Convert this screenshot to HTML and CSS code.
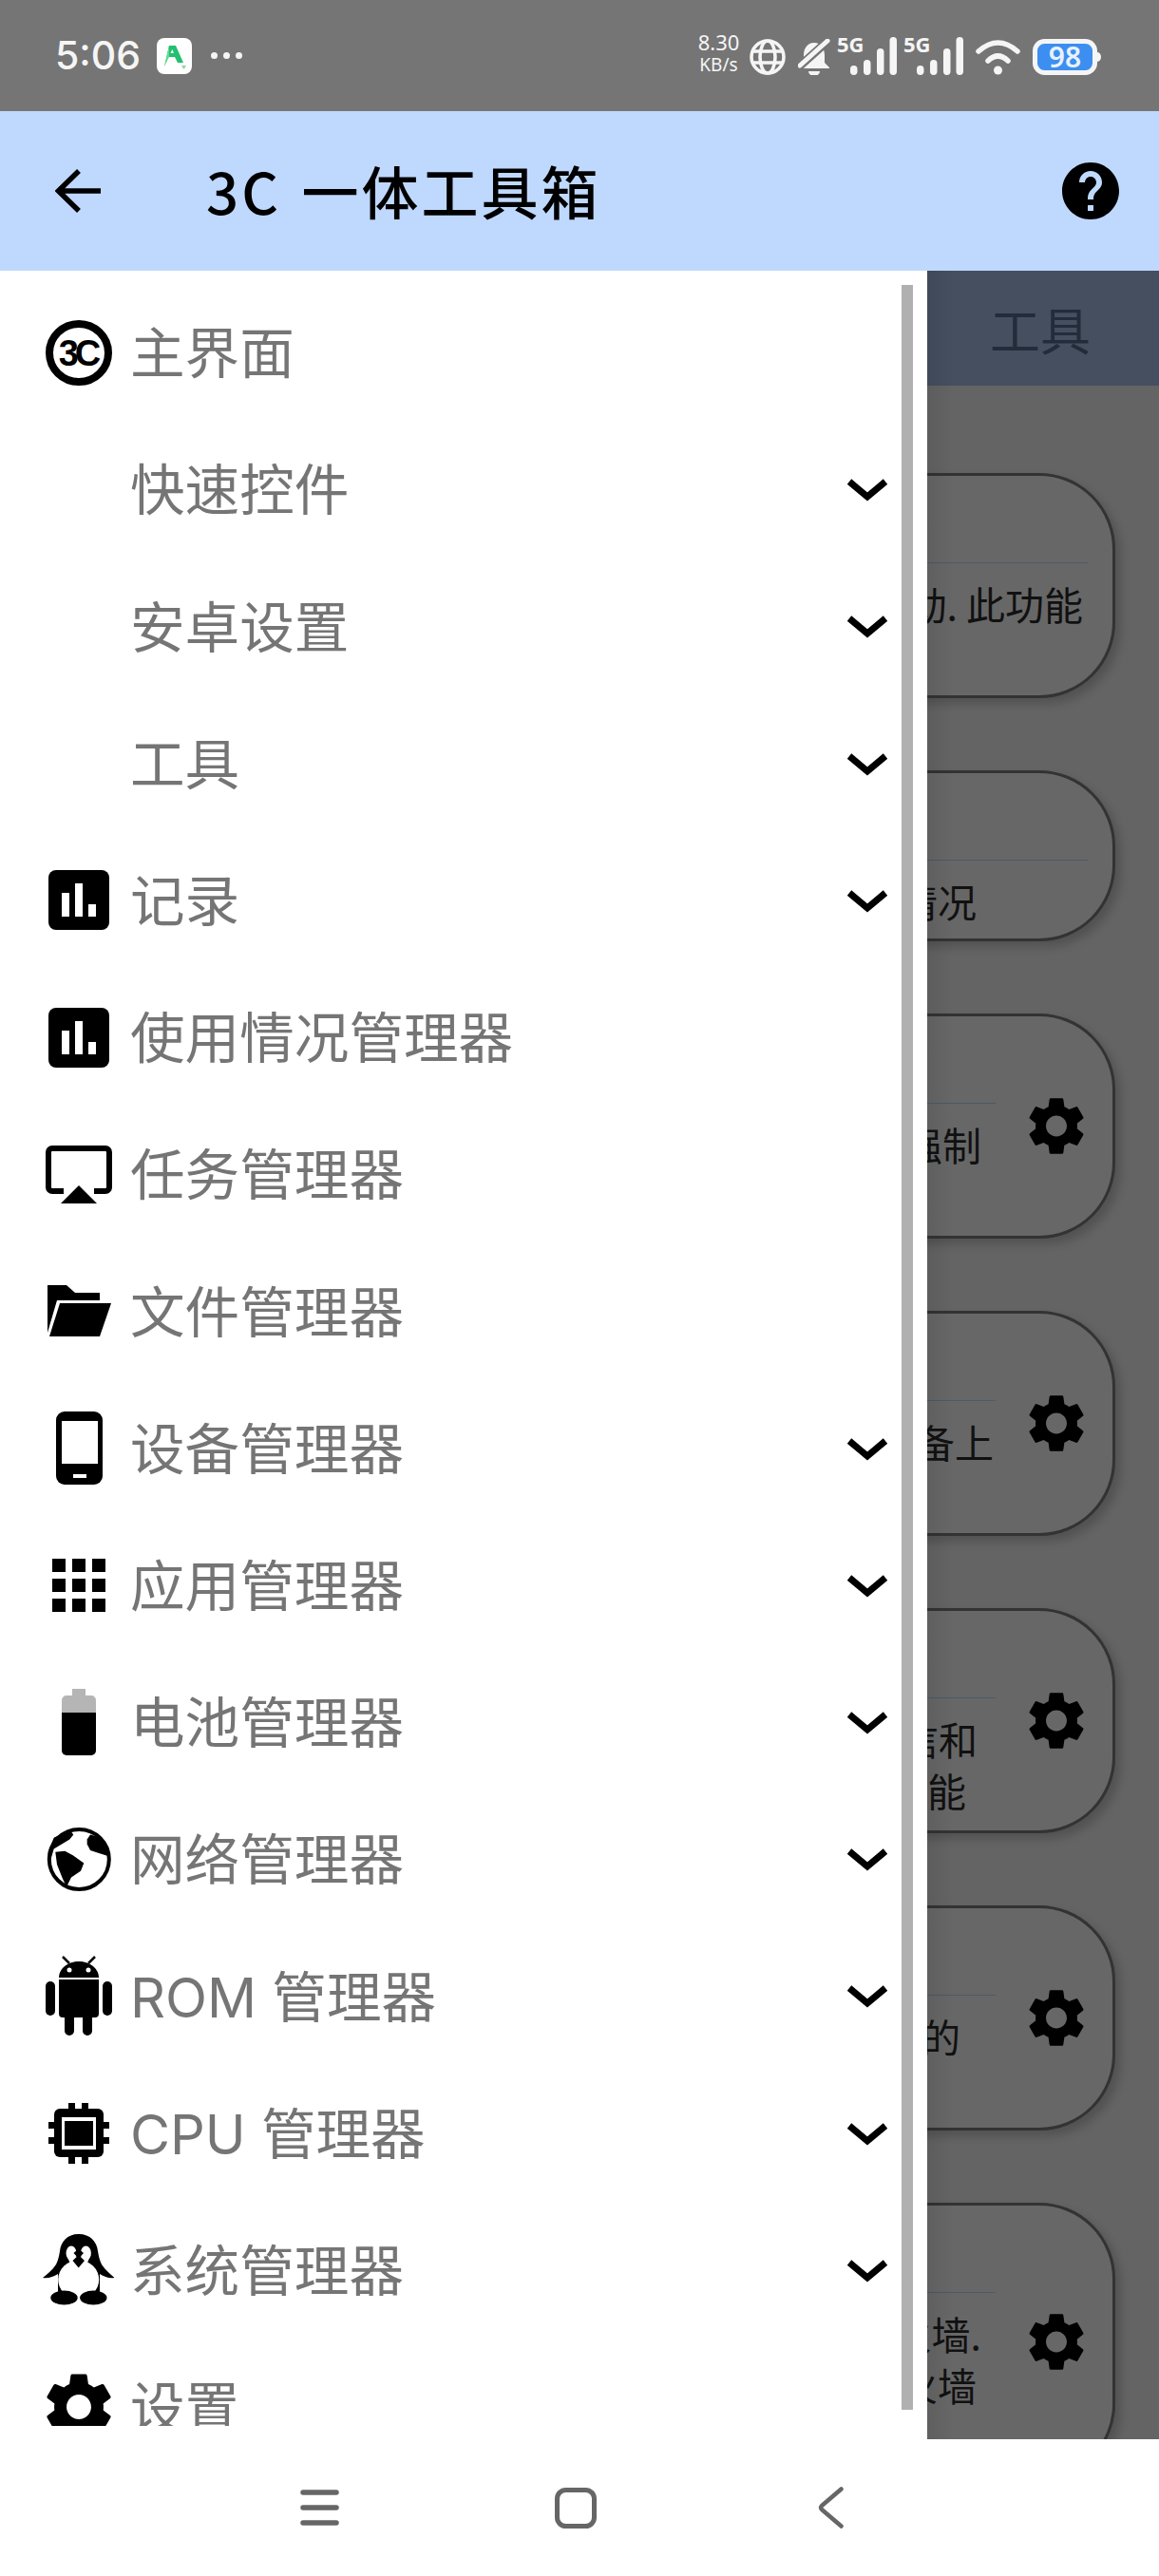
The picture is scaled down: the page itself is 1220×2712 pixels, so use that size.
FILE: index.html
```html
<!DOCTYPE html>
<html lang="zh-CN">
<head>
    <meta charset="UTF-8">
    <meta name="viewport" content="width=device-width, initial-scale=1.0">
    <title>3C 一体工具箱</title>
    <link rel="stylesheet" href="styles.css">
</head>
<body>
    <svg class="defs" aria-hidden="true">
        <symbol id="gear" viewBox="2.6 2 18.8 20">
            <path d="M19.14 12.94c.04-.3.06-.61.06-.94 0-.32-.02-.64-.07-.94l2.03-1.58c.18-.14.23-.41.12-.61l-1.92-3.32c-.12-.22-.37-.29-.59-.22l-2.39.96c-.5-.38-1.03-.7-1.62-.94l-.36-2.54c-.04-.24-.24-.41-.48-.41h-3.84c-.24 0-.43.17-.47.41l-.36 2.54c-.59.24-1.13.57-1.62.94l-2.39-.96c-.22-.08-.47 0-.59.22L2.74 8.87c-.12.21-.08.47.12.61l2.03 1.58c-.05.3-.09.63-.09.94s.02.64.07.94l-2.03 1.58c-.18.14-.23.41-.12.61l1.92 3.32c.12.22.37.29.59.22l2.39-.96c.5.38 1.03.7 1.62.94l.36 2.54c.05.24.24.41.48.41h3.84c.24 0 .44-.17.47-.41l.36-2.54c.59-.24 1.13-.56 1.62-.94l2.39.96c.22.08.47 0 .59-.22l1.92-3.32c.12-.22.07-.47-.12-.61l-2.01-1.58zM12 15.6c-1.98 0-3.6-1.62-3.6-3.6s1.62-3.6 3.6-3.6 3.6 1.62 3.6 3.6-1.62 3.6-3.6 3.6z"/>
        </symbol>
        <symbol id="chevron" viewBox="0 0 42 26">
            <path d="M2 4 L21 20 L40 4" fill="none" stroke="#000" stroke-width="7"/>
        </symbol>
        <symbol id="bars" viewBox="0 0 64 63">
            <rect width="64" height="63" rx="8"/>
            <path fill="#fff" d="M14 24h8v25h-8zM28 14h8v35h-8zM42 36h8v13h-8z"/>
        </symbol>
        <symbol id="signal" viewBox="0 0 63 41">
            <text x="0" y="17" class="signal-type">5G</text>
            <g fill="#f5f5f5">
                <rect x="14" y="31" width="7.500" height="10" rx="3.700"/>
                <rect x="28" y="25" width="7.500" height="16" rx="3.700"/>
                <rect x="42" y="13" width="7.500" height="28" rx="3.700"/>
                <rect x="55.500" y="1" width="7.500" height="40" rx="3.700"/>
            </g>
        </symbol>
    </svg>

    <div class="phone">
        <div class="status-bar">
            <span class="clock">5:06</span>
            <svg class="app-badge" viewBox="0 0 37 38">
                <rect width="37" height="38" rx="8" fill="#fff"/>
                <path d="M13 8H20L28 26H22L19 20H12L8 30z" fill="#22c070"/>
                <path d="M13 8L8 30L13 20z" fill="#5fdc8f"/>
                <path d="M14.500 16h3.500l-1.700-4z" fill="#fff"/>
                <path d="M26 29h5l-2.500 4z" fill="#8ad6a6"/>
            </svg>
            <span class="dots"><i></i><i></i><i></i></span>
            <div class="status-icons">
                <div class="net-speed"><span>8.30</span><span class="unit">KB/s</span></div>
                <svg class="ic-globe" viewBox="0 0 38 38" fill="none" stroke="#f5f5f5" stroke-width="3.600">
                    <circle cx="19" cy="19" r="17"/>
                    <ellipse cx="19" cy="19" rx="8" ry="17"/>
                    <path d="M3 13h32M3 25h32"/>
                </svg>
                <svg class="ic-bell" viewBox="0 0 34 38">
                    <path d="M17 4C10 4 6 10 6 17v8l-5 5v1h32v-1l-5-5v-8c0-7-4-13-11-13z" fill="#f5f5f5"/>
                    <path d="M11 34h12a6 5 0 0 1-12 0z" fill="#f5f5f5"/>
                    <path d="M36 -2L-2 32" stroke="#757575" stroke-width="9"/>
                    <path d="M31 2L2 28" stroke="#f5f5f5" stroke-width="5" stroke-linecap="round"/>
                </svg>
                <svg class="ic-signal"><use href="#signal"/></svg>
                <svg class="ic-signal"><use href="#signal"/></svg>
                <svg class="ic-wifi" viewBox="0 0 47 38" fill="none" stroke="#f5f5f5" stroke-width="5.500" stroke-linecap="round">
                    <path d="M3 13Q23.500 -5 44 13"/>
                    <path d="M13 23Q23.500 13 34 23"/>
                    <circle cx="23.500" cy="33" r="4.500" fill="#f5f5f5" stroke="none"/>
                </svg>
                <svg class="ic-battery" viewBox="0 0 72 38">
                    <rect x="2.500" y="2.500" width="63" height="33" rx="10" fill="#3c8ef0" stroke="#f5f5f5" stroke-width="5"/>
                    <path d="M68 14a4 5 0 0 1 0 10z" fill="#f5f5f5"/>
                    <text x="34" y="29.500" class="battery-level">98</text>
                </svg>
            </div>
        </div>

        <header class="app-bar">
            <svg class="back-arrow" viewBox="0 0 48 46" fill="none" stroke="#000" stroke-width="5.500">
                <path d="M25 2L3.500 23L25 44M3.500 23H48"/>
            </svg>
            <h1 class="app-title">3C 一体工具箱</h1>
            <svg class="help-icon" viewBox="2 2 20 20">
                <path d="M12 2C6.480 2 2 6.480 2 12s4.480 10 10 10 10-4.480 10-10S17.520 2 12 2zm1 17h-2v-2h2v2zm2.070-7.750l-.9.920C13.450 12.900 13 13.500 13 15h-2v-.5c0-1.100.45-2.100 1.170-2.830l1.240-1.260c.37-.36.59-.86.59-1.410 0-1.100-.9-2-2-2s-2 .9-2 2H8c0-2.210 1.790-4 4-4s4 1.790 4 4c0 .88-.36 1.680-.93 2.250z"/>
            </svg>
        </header>

        <main class="content">
            <div class="tabs"><span class="tab">工具</span></div>
            <div class="cards">
                <div class="card card-plain">
                    <div class="card-body">
                        <p class="line end-5">动. 此功能</p>
                    </div>
                </div>
                <div class="card card-plain card-short">
                    <div class="card-body">
                        <p class="line end-117">情况</p>
                    </div>
                </div>
                <div class="card">
                    <div class="card-body">
                        <p class="line end-15">强制</p>
                    </div>
                    <svg class="card-gear"><use href="#gear"/></svg>
                </div>
                <div class="card">
                    <div class="card-body">
                        <p class="line end-2">设备上</p>
                    </div>
                    <svg class="card-gear"><use href="#gear"/></svg>
                </div>
                <div class="card">
                    <div class="card-body">
                        <p class="line end-19">短信和</p>
                        <p class="line end-31">功能</p>
                    </div>
                    <svg class="card-gear"><use href="#gear"/></svg>
                </div>
                <div class="card">
                    <div class="card-body">
                        <p class="line end-37">的</p>
                    </div>
                    <svg class="card-gear"><use href="#gear"/></svg>
                </div>
                <div class="card card-tall">
                    <div class="card-body">
                        <p class="line end-15">防火墙.</p>
                        <p class="line end-20">防火墙</p>
                    </div>
                    <svg class="card-gear"><use href="#gear"/></svg>
                </div>
            </div>
        </main>

        <nav class="drawer">
            <ul class="menu">
                <li class="menu-row">
                    <span class="menu-icon">
                        <svg width="70" height="69" viewBox="0 0 70 69">
                            <ellipse cx="35" cy="34.500" rx="31" ry="30.500" fill="none" stroke="#000" stroke-width="8"/>
                            <text x="34" y="47.500" class="logo-3c">3C</text>
                        </svg>
                    </span>
                    <span class="menu-label">主界面</span>
                </li>
                <li class="menu-row">
                    <span class="menu-icon"></span>
                    <span class="menu-label">快速控件</span>
                    <svg class="chevron"><use href="#chevron"/></svg>
                </li>
                <li class="menu-row">
                    <span class="menu-icon"></span>
                    <span class="menu-label">安卓设置</span>
                    <svg class="chevron"><use href="#chevron"/></svg>
                </li>
                <li class="menu-row">
                    <span class="menu-icon"></span>
                    <span class="menu-label">工具</span>
                    <svg class="chevron"><use href="#chevron"/></svg>
                </li>
                <li class="menu-row">
                    <span class="menu-icon"><svg width="64" height="63"><use href="#bars"/></svg></span>
                    <span class="menu-label">记录</span>
                    <svg class="chevron"><use href="#chevron"/></svg>
                </li>
                <li class="menu-row">
                    <span class="menu-icon"><svg width="64" height="63"><use href="#bars"/></svg></span>
                    <span class="menu-label">使用情况管理器</span>
                </li>
                <li class="menu-row">
                    <span class="menu-icon">
                        <svg width="70" height="61" viewBox="0 0 70 61">
                            <path d="M19 48H7a4 4 0 0 1-4-4V7a4 4 0 0 1 4-4H63a4 4 0 0 1 4 4V44a4 4 0 0 1-4 4H51" fill="none" stroke="#000" stroke-width="6"/>
                            <path d="M16 61H54L35 42z"/>
                        </svg>
                    </span>
                    <span class="menu-label">任务管理器</span>
                </li>
                <li class="menu-row">
                    <span class="menu-icon">
                        <svg width="67" height="54" viewBox="0 0 67 54">
                            <path d="M0 0H20L29 8H55V16H10L0 50z"/>
                            <path d="M13 19H67L55 54H2z"/>
                        </svg>
                    </span>
                    <span class="menu-label">文件管理器</span>
                </li>
                <li class="menu-row">
                    <span class="menu-icon">
                        <svg width="49" height="77" viewBox="0 0 49 77">
                            <rect width="49" height="77" rx="9"/>
                            <path fill="#fff" d="M6 10h38v45H6zM18 66h14v4H18z"/>
                        </svg>
                    </span>
                    <span class="menu-label">设备管理器</span>
                    <svg class="chevron"><use href="#chevron"/></svg>
                </li>
                <li class="menu-row">
                    <span class="menu-icon">
                        <svg width="56" height="56" viewBox="0 0 56 56">
                            <path d="M0 0h14v14H0zM21 0h14v14H21zM42 0h14v14H42zM0 21h14v14H0zM21 21h14v14H21zM42 21h14v14H42zM0 42h14v14H0zM21 42h14v14H21zM42 42h14v14H42z"/>
                        </svg>
                    </span>
                    <span class="menu-label">应用管理器</span>
                    <svg class="chevron"><use href="#chevron"/></svg>
                </li>
                <li class="menu-row">
                    <span class="menu-icon">
                        <svg width="36" height="70" viewBox="0 0 36 70">
                            <path fill="#b5b5b5" d="M11 0h14v7h6a5 5 0 0 1 5 5v14H0V12a5 5 0 0 1 5-5h6z"/>
                            <path d="M0 25h36v40a5 5 0 0 1-5 5H5a5 5 0 0 1-5-5z"/>
                        </svg>
                    </span>
                    <span class="menu-label">电池管理器</span>
                    <svg class="chevron"><use href="#chevron"/></svg>
                </li>
                <li class="menu-row">
                    <span class="menu-icon">
                        <svg width="68" height="67" viewBox="0 0 68 67">
                            <circle cx="34.300" cy="33.500" r="31.500" fill="#fff" stroke="#000" stroke-width="4"/>
                            <path d="M1.700 25.800L7.700 10.800L24.300 2.500L28.300 7.500L24.300 12.500L16 17.500L7.700 22.500L4.300 34z"/>
                            <path d="M42.700 12.500L46 7.500L57.700 10.800L67 30.800L54.300 26.800L46 24L42.700 17.500z"/>
                            <path d="M9.300 25.800L19.300 24.800L27.700 29.200L39.300 37.500L36 45.800L26 52.500L21 62.500L17 54L11 39z"/>
                        </svg>
                    </span>
                    <span class="menu-label">网络管理器</span>
                    <svg class="chevron"><use href="#chevron"/></svg>
                </li>
                <li class="menu-row">
                    <span class="menu-icon">
                        <svg width="70" height="84" viewBox="0 0 70 84">
                            <rect y="27" width="10" height="36" rx="5"/>
                            <rect x="60" y="27" width="10" height="36" rx="5"/>
                            <path d="M14 25h42v36a4 4 0 0 1-4 4h-3v14a5 5 0 0 1-10 0V65h-9v14a5 5 0 0 1-10 0V65h-2a4 4 0 0 1-4-4z"/>
                            <path d="M14 23C14 13 24 6 35 6s21 7 21 17z"/>
                            <path d="M18 1l7 7M52 1l-7 7" stroke="#000" stroke-width="2.500"/>
                            <circle cx="25" cy="15" r="2.500" fill="#fff"/>
                            <circle cx="45" cy="15" r="2.500" fill="#fff"/>
                        </svg>
                    </span>
                    <span class="menu-label">ROM 管理器</span>
                    <svg class="chevron"><use href="#chevron"/></svg>
                </li>
                <li class="menu-row">
                    <span class="menu-icon">
                        <svg width="64" height="64" viewBox="0 0 64 64">
                            <path d="M21 0h7v8h-7zM35 0h7v8h-7zM21 56h7v8h-7zM35 56h7v8h-7zM0 20h8v7H0zM0 36h8v7H0zM56 20h8v7h-8zM56 36h8v7h-8z"/>
                            <rect x="6" y="6" width="52" height="51" rx="6"/>
                            <path fill="#fff" d="M14 15h36v34H14z"/>
                            <path d="M17 19h30v26H17z"/>
                        </svg>
                    </span>
                    <span class="menu-label">CPU 管理器</span>
                    <svg class="chevron"><use href="#chevron"/></svg>
                </li>
                <li class="menu-row">
                    <span class="menu-icon">
                        <svg width="76" height="75" viewBox="0 0 76 75">
                            <path d="M37.700 0C50 0 57 8 58 18C59 24 60 28 62 32C66 38 71 42 75.500 46C70 47 65 45 60 42V64H16V42C11 45 6 47 0 46C5 42 10 38 14 32C16 28 17 24 18 18C19 8 26 0 37.700 0z"/>
                            <ellipse cx="37.700" cy="48" rx="21.500" ry="20.500" fill="#fff"/>
                            <ellipse cx="30" cy="20" rx="5.500" ry="7.500" fill="#fff"/>
                            <ellipse cx="45.400" cy="20" rx="5.500" ry="7.500" fill="#fff"/>
                            <path fill="#fff" d="M25 22L31 36H44.500L50.500 22L37.700 24z"/>
                            <path d="M37.700 15.500L43 20L39.500 23.700L44 28L37.700 35.500L31.500 28L36 23.700L32.500 20z"/>
                            <ellipse cx="22.500" cy="67" rx="14.200" ry="7.500"/>
                            <ellipse cx="53.300" cy="67" rx="14.200" ry="7.500"/>
                        </svg>
                    </span>
                    <span class="menu-label">系统管理器</span>
                    <svg class="chevron"><use href="#chevron"/></svg>
                </li>
                <li class="menu-row">
                    <span class="menu-icon"><svg width="68" height="72"><use href="#gear"/></svg></span>
                    <span class="menu-label">设置</span>
                </li>
            </ul>
            <div class="scroll-thumb"></div>
        </nav>

        <footer class="nav-bar">
            <svg class="nav-menu" viewBox="0 0 41 38" fill="none" stroke="#666" stroke-width="5.500" stroke-linecap="round">
                <path d="M3 3H38M3 19H38M3 35H38"/>
            </svg>
            <svg class="nav-home" viewBox="0 0 44 43">
                <rect x="2.500" y="2.500" width="39" height="38" rx="9" fill="none" stroke="#666" stroke-width="5"/>
            </svg>
            <svg class="nav-back" viewBox="0 0 27 44" fill="none" stroke="#666" stroke-width="4.500" stroke-linecap="round" stroke-linejoin="round">
                <path d="M24.500 2.500L4 20Q2 22 4 24L24.500 41.500"/>
            </svg>
        </footer>
    </div>
</body>
</html>
```

FILE: styles.css
```css
* {
    box-sizing: border-box;
}
body {
    margin: 0;
    font-family: "Noto Sans CJK SC", "Noto Sans", sans-serif;
    background: #fff;
}
.defs {
    position: absolute;
    width: 0;
    height: 0;
}
.phone {
    position: relative;
    display: flex;
    flex-direction: column;
    width: 1220px;
    height: 2712px;
    overflow: hidden;
}

/* status bar */
.status-bar {
    display: flex;
    align-items: center;
    flex: 0 0 117px;
    padding: 0 61px 0 58px;
    background: #757575;
    color: #f5f5f5;
}
.clock {
    font-family: Inter, sans-serif;
    font-size: 41px;
    font-weight: 500;
    width: 88px;
    line-height: 1;
    margin-top: -1px;
    white-space: nowrap;
}
.app-badge {
    width: 37px;
    height: 38px;
    margin-left: 19px;
}
.dots {
    display: flex;
    gap: 6px;
    margin-left: 20px;
}
.dots i {
    width: 7px;
    height: 7px;
    border-radius: 50%;
    background: #f5f5f5;
}
.status-icons {
    display: flex;
    align-items: flex-end;
    gap: 13px;
    height: 41px;
    margin-left: auto;
}
.net-speed {
    display: flex;
    flex-direction: column;
    align-items: center;
    width: 43px;
    margin-right: -2px;
    font-family: "Noto Sans", sans-serif;
    font-size: 22px;
    line-height: 26px;
}
.net-speed .unit {
    font-size: 19px;
    line-height: 22px;
}
.ic-globe {
    width: 38px;
    height: 38px;
}
.ic-bell {
    width: 34px;
    height: 38px;
}
.ic-signal {
    width: 63px;
    height: 41px;
    margin-left: -6px;
}
.signal-type {
    font-family: "Noto Sans", sans-serif;
    font-size: 22px;
    font-weight: 700;
    fill: #f5f5f5;
}
.ic-wifi {
    width: 47px;
    height: 38px;
}
.ic-battery {
    width: 72px;
    height: 38px;
}
.battery-level {
    font-family: "Noto Sans", sans-serif;
    font-size: 30px;
    font-weight: 600;
    fill: #e8f2ff;
    text-anchor: middle;
}

/* app bar */
.app-bar {
    display: flex;
    align-items: center;
    flex: 0 0 168px;
    padding: 0 42px 0 58px;
    background: #bfd8fd;
}
.back-arrow {
    width: 48px;
    height: 46px;
}
.app-title {
    margin: -3px 0 0 111px;
    font-size: 60px;
    font-weight: 500;
    letter-spacing: 3px;
    word-spacing: 5px;
    color: #000;
}
.help-icon {
    width: 60px;
    height: 60px;
    margin-left: auto;
}

/* page under the drawer */
.content {
    flex: 1;
    min-height: 0;
    overflow: hidden;
    background: #646464;
}
.tabs {
    display: flex;
    align-items: center;
    justify-content: flex-end;
    height: 121px;
    padding-right: 72px;
    background: #454f60;
}
.tab {
    font-size: 53px;
    color: #222c3b;
}
.cards {
    display: flex;
    flex-direction: column;
    gap: 76px;
    padding: 92px 46px 0 40px;
}
.card {
    display: flex;
    align-items: center;
    gap: 35px;
    flex-shrink: 0;
    height: 237px;
    padding-right: 30px;
    border: 3px solid #333;
    border-radius: 80px;
    background: #676767;
    box-shadow: 6px 6px 10px rgba(0, 0, 0, 0.18);
}
.card-plain {
    padding-right: 26px;
}
.card-short {
    height: 180px;
}
.card-tall {
    height: 292px;
}
.card-body {
    flex: 1;
    align-self: flex-start;
    margin-top: 91px;
    padding-top: 15px;
    border-top: 1px solid #4c5a68;
}
.line {
    margin: 0;
    font-size: 41px;
    line-height: 54px;
    text-align: right;
    color: #111;
    white-space: nowrap;
}
.end-2 { padding-right: 2px; }
.end-5 { padding-right: 5px; }
.end-15 { padding-right: 15px; }
.end-19 { padding-right: 19px; }
.end-20 { padding-right: 20px; }
.end-31 { padding-right: 31px; }
.end-37 { padding-right: 37px; }
.end-117 { padding-right: 117px; }
.card-gear {
    flex-shrink: 0;
    width: 58px;
    height: 61px;
}

/* drawer */
.drawer {
    position: absolute;
    top: 285px;
    left: 0;
    bottom: 144px;
    width: 976px;
    background: #fff;
}
.drawer::after {
    content: "";
    position: absolute;
    top: 0;
    bottom: 0;
    left: 100%;
    width: 28px;
    background: linear-gradient(to right, rgba(0, 0, 0, 0.08), rgba(0, 0, 0, 0));
}
.menu {
    height: 2269px;
    margin: 0;
    padding: 14px 42px 0 48px;
    list-style: none;
    overflow: hidden;
}
.menu-row {
    display: flex;
    align-items: center;
    gap: 19px;
    height: 144.2px;
}
.menu-icon {
    display: flex;
    align-items: center;
    justify-content: center;
    flex: 0 0 70px;
    min-width: 0;
    height: 90px;
}
.menu-icon svg {
    flex-shrink: 0;
}
.menu-label {
    flex: 1;
    font-family: Inter, "Noto Sans CJK SC", sans-serif;
    font-size: 57.6px;
    line-height: 1;
    padding-top: 4px;
    color: #757575;
}
.chevron {
    width: 42px;
    height: 26px;
    margin-top: 2px;
}
.logo-3c {
    font-family: "Liberation Sans", sans-serif;
    font-size: 38px;
    font-weight: 700;
    letter-spacing: -4px;
    text-anchor: middle;
}
.scroll-thumb {
    position: absolute;
    top: 15px;
    right: 15px;
    width: 12px;
    height: 2237px;
    background: #b0b0b0;
}

/* system navigation */
.nav-bar {
    position: relative;
    display: flex;
    align-items: center;
    gap: 227px;
    flex: 0 0 144px;
    padding-left: 316px;
    background: #fff;
}
.nav-menu {
    width: 41px;
    height: 38px;
}
.nav-home {
    width: 44px;
    height: 43px;
}
.nav-back {
    width: 27px;
    height: 44px;
    margin-left: 6px;
}
```
